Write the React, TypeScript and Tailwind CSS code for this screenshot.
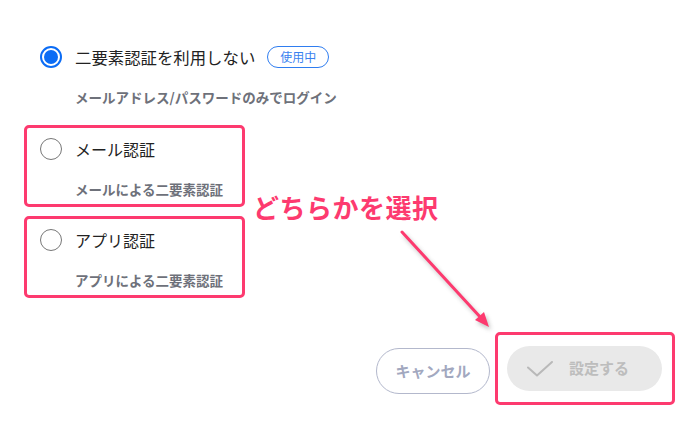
import React from 'react';

const jp = "font-['Noto_Sans_CJK_JP','Noto_Sans',sans-serif]";

const Radio: React.FC<{ checked?: boolean }> = ({ checked }) =>
  checked ? (
    <span className="w-[22px] h-[22px] rounded-full border-2 border-[#0b6cf5] flex items-center justify-center flex-shrink-0">
      <span className="w-[14px] h-[14px] rounded-full bg-[#0b6cf5]" />
    </span>
  ) : (
    <span className="w-[22px] h-[22px] rounded-full border-[1.5px] border-[#777] flex-shrink-0" />
  );

const OptionBox: React.FC<{ label: string; sub: string }> = ({ label, sub }) => (
  <div className="w-[221px] h-[82px] border-[3px] border-[#fd3a6f] rounded-[5px] pl-[13px] pt-[9px]">
    <div className="flex items-center h-[24px] gap-[13px]">
      <Radio />
      <span className="text-[16px] text-[#222] leading-[24px]">{label}</span>
    </div>
    <div className="mt-[18px] ml-[35px] text-[13.5px] leading-[20px] font-bold text-[#6e717a]">{sub}</div>
  </div>
);

export default function App() {
  return (
    <div className={`relative w-[700px] h-[432px] bg-white overflow-hidden ${jp}`}>
      <div className="pl-[24px] pt-[45px]">
        {/* current setting */}
        <div className="pl-[16px]">
          <div className="flex items-center h-[24px] gap-[13px]">
            <Radio checked />
            <span className="text-[16.4px] text-[#222] leading-[24px]">二要素認証を利用しない</span>
            <span className="ml-[-1px] h-[22px] w-[62px] rounded-full border border-[#2f7df0] text-[#3a82f0] text-[12px] flex items-center justify-center">
              使用中
            </span>
          </div>
          <div className="mt-[18px] ml-[35px] text-[13.5px] leading-[20px] font-bold text-[#6e717a]">
            メールアドレス/パスワードのみでログイン
          </div>
        </div>

        <div className="mt-[18px] flex flex-col gap-[9px]">
          <OptionBox label="メール認証" sub="メールによる二要素認証" />
          <OptionBox label="アプリ認証" sub="アプリによる二要素認証" />
        </div>
      </div>

      {/* buttons */}
      <div className="mt-[34px] flex justify-end items-center pr-[25px]">
        <button className="w-[114px] h-[46px] mt-[5px] rounded-full border border-[#b3b8cc] text-[#a2a8bf] text-[15px] font-bold">
          キャンセル
        </button>
        <div className="ml-[5px] w-[180px] h-[73px] border-[3px] border-[#fd3a6f] rounded-[5px] flex items-center pl-[9px]">
          <div className="w-[155px] h-[45px] rounded-full bg-[#e9e9e9] flex items-center pl-[20px]">
            <svg width="26" height="16" viewBox="0 0 26 16" fill="none">
              <path d="M1 6.5 L10 14.5 L25 1" stroke="#b9b9b9" strokeWidth="2" strokeLinecap="round" strokeLinejoin="round" />
            </svg>
            <span className="ml-[16px] text-[15px] font-bold text-[#bdbdbd]">設定する</span>
          </div>
        </div>
      </div>

      {/* annotation */}
      <div className="absolute left-[253px] top-[190px] text-[26px] leading-[34px] font-bold text-[#fd3a6f] tracking-[0.5px]">
        どちらかを選択
      </div>
      <svg className="absolute left-0 top-0" width="700" height="432" viewBox="0 0 700 432">
        <defs>
          <filter id="sh" x="-20%" y="-20%" width="140%" height="140%">
            <feGaussianBlur stdDeviation="2" />
          </filter>
        </defs>
        <g filter="url(#sh)" opacity="0.45" transform="translate(2,3)">
          <line x1="402" y1="232" x2="482" y2="319" stroke="#777" strokeWidth="3" />
          <polygon points="489,327 475,320 484,312" fill="#777" />
        </g>
        <line x1="402" y1="232" x2="482" y2="319" stroke="#fd3a6f" strokeWidth="3" strokeLinecap="round" />
        <polygon points="489,327 475,320 484,312" fill="#fd3a6f" />
      </svg>
    </div>
  );
}
